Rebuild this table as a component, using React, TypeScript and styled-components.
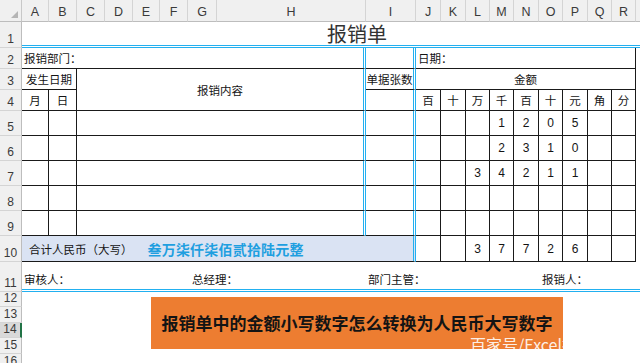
import React from "react";
import styled, { createGlobalStyle } from "styled-components";

const GlobalStyle = createGlobalStyle`
  html, body { margin: 0; padding: 0; background: #ffffff; }
  body {
    width: 640px;
    height: 363px;
    overflow: hidden;
    font-family: "Noto Sans CJK SC", "Liberation Sans", sans-serif;
  }
`;

const COLS = [22, 27, 28, 28, 28, 27, 28, 29, 149, 50, 25, 25, 24, 24, 25, 24, 25, 24, 24, 60];
const ROWS = [22, 26, 21, 21, 21, 25, 25, 25, 25, 25, 26, 30, 15, 16, 15, 16, 16];
const LETTERS = "ABCDEFGHIJKLMNOPQRS".split("");

type Edge = "black" | "blue" | "none";
const edge = (e?: Edge) =>
  e === "black" ? "1px solid #1a1a1a" : e === "blue" ? "3px double #22b0f0" : "none";

const Sheet = styled.div`
  display: grid;
  grid-template-columns: ${COLS.map((c) => c + "px").join(" ")};
  grid-template-rows: ${ROWS.map((r) => r + "px").join(" ")};
  width: 640px;
  height: 363px;
  overflow: hidden;
  background: #ffffff;
`;

const Corner = styled.div`
  grid-area: 1 / 1 / 2 / 2;
  background: #f0f0f0;
  border-right: 1px solid #c8c8c8;
  border-bottom: 1px solid #bdbdbd;
  box-sizing: border-box;
  display: flex;
  align-items: flex-end;
  justify-content: flex-end;
  padding: 0 3px 3px 0;
`;

const ColHead = styled.div<{ $col: number }>`
  grid-area: 1 / ${(p) => p.$col} / 2 / ${(p) => p.$col + 1};
  background: #f0f0f0;
  border-right: 1px solid #d4d4d4;
  border-bottom: 1px solid #bdbdbd;
  box-sizing: border-box;
  display: flex;
  align-items: center;
  justify-content: center;
  font-family: "Liberation Sans", Arial, sans-serif;
  font-size: 12.5px;
  color: #3a3a3a;
  padding-top: 2px;
  overflow: hidden;
`;

const RowHead = styled.div<{ $row: number; $selected?: boolean }>`
  grid-area: ${(p) => p.$row} / 1 / ${(p) => p.$row + 1} / 2;
  background: ${(p) => (p.$selected ? "#d9d9d9" : "#f0f0f0")};
  border-right: ${(p) => (p.$selected ? "2px solid #217346" : "1px solid #bdbdbd")};
  border-bottom: 1px solid #d4d4d4;
  box-sizing: border-box;
  display: flex;
  align-items: flex-end;
  justify-content: center;
  padding-bottom: 1px;
  font-family: "Liberation Sans", Arial, sans-serif;
  font-size: 12px;
  line-height: 14px;
  color: #3a3a3a;
  overflow: hidden;
`;

const Cell = styled.div<{ $area: string; $right?: Edge; $bottom?: Edge }>`
  grid-area: ${(p) => p.$area};
  border-right: ${(p) => edge(p.$right)};
  border-bottom: ${(p) => edge(p.$bottom)};
  box-sizing: border-box;
  min-width: 0;
  overflow: hidden;
  display: flex;
  align-items: center;
  white-space: nowrap;
  color: #141414;
`;

const Title = styled(Cell)`
  justify-content: center;
  overflow: visible;
  font-size: 20px;
  line-height: 22px;
  color: #333333;
  padding-right: 4px;
`;

const HeadLabel = styled(Cell)`
  justify-content: center;
  font-size: 11.5px;
`;

const FieldLabel = styled(Cell)`
  justify-content: flex-start;
  padding-left: 2px;
  font-size: 11.5px;
`;

const Digit = styled(Cell)`
  justify-content: center;
  font-family: "Liberation Sans", Arial, sans-serif;
  font-size: 12px;
`;

const TotalCell = styled(Cell)`
  background: #dae3f3;
  padding-left: 7px;
  gap: 15px;
  font-size: 11.5px;
`;

const TotalWords = styled.span`
  font-size: 14px;
  font-weight: 700;
  color: #1f9fe0;
  letter-spacing: 0.2px;
`;

const SignLabel = styled(Cell)<{ $indent: number }>`
  padding-left: ${(p) => p.$indent}px;
  padding-top: 6px;
  font-size: 11.5px;
`;

const Banner = styled.div`
  grid-area: 13 / 2 / 18 / -1;
  justify-self: start;
  align-self: start;
  position: relative;
  margin: 5px 0 0 129px;
  width: 412px;
  height: 52px;
  background: #ed7d31;
  display: flex;
  align-items: center;
  justify-content: center;
  overflow: hidden;
  font-size: 17px;
  line-height: 20px;
  font-weight: 700;
  color: #141414;
  white-space: nowrap;
`;

const Watermark = styled.span`
  position: absolute;
  left: 319px;
  top: 39px;
  font-size: 16px;
  line-height: 16px;
  font-weight: 400;
  color: rgba(255, 255, 255, 0.9);
`;

const UNITS = ["百", "十", "万", "千", "百", "十", "元", "角", "分"];
const AMOUNTS: string[][] = [
  ["", "", "", "1", "2", "0", "5", "", ""],
  ["", "", "", "2", "3", "1", "0", "", ""],
  ["", "", "3", "4", "2", "1", "1", "", ""],
  ["", "", "", "", "", "", "", "", ""],
  ["", "", "", "", "", "", "", "", ""],
];
const TOTAL = ["", "", "3", "7", "7", "2", "6", "", ""];

const area = (r: number, c: number, r2 = r + 1, c2 = c + 1) => `${r} / ${c} / ${r2} / ${c2}`;

export default function App() {
  return (
    <>
      <GlobalStyle />
      <Sheet>
        <Corner>
          <svg width="7" height="7" viewBox="0 0 7 7">
            <polygon points="7,0 7,7 0,7" fill="#b5b5b5" />
          </svg>
        </Corner>
        {LETTERS.map((l, i) => (
          <ColHead key={l} $col={i + 2}>
            {l}
          </ColHead>
        ))}
        {Array.from({ length: 16 }, (_, i) => (
          <RowHead key={i} $row={i + 2} $selected={i + 1 === 14}>
            {i + 1}
          </RowHead>
        ))}

        {/* Row 1 */}
        <Title $area="2 / 2 / 3 / -1" $bottom="blue">
          报销单
        </Title>

        {/* Row 2 */}
        <FieldLabel $area={area(3, 2, 4, 10)} $right="blue" $bottom="black">
          报销部门：
        </FieldLabel>
        <Cell $area={area(3, 10)} $right="blue" $bottom="black" />
        <FieldLabel $area={area(3, 11, 4, 20)} $right="black" $bottom="black">
          日期：
        </FieldLabel>

        {/* Rows 3-4 */}
        <HeadLabel $area={area(4, 2, 5, 4)} $right="black" $bottom="black">
          发生日期
        </HeadLabel>
        <HeadLabel $area={area(4, 4, 6, 10)} $right="blue" $bottom="black">
          报销内容
        </HeadLabel>
        <HeadLabel $area={area(4, 10)} $right="blue" $bottom="black">
          单据张数
        </HeadLabel>
        <HeadLabel $area={area(4, 11, 5, 20)} $right="black" $bottom="black">
          金额
        </HeadLabel>
        <HeadLabel $area={area(5, 2)} $right="black" $bottom="black">
          月
        </HeadLabel>
        <HeadLabel $area={area(5, 3)} $right="black" $bottom="black">
          日
        </HeadLabel>
        <Cell $area={area(5, 10)} $right="blue" $bottom="black" />
        {UNITS.map((u, i) => (
          <HeadLabel key={"u" + i} $area={area(5, 11 + i)} $right="black" $bottom="black">
            {u}
          </HeadLabel>
        ))}

        {/* Rows 5-9 */}
        {AMOUNTS.map((row, ri) => {
          const t = 6 + ri;
          return (
            <React.Fragment key={"r" + ri}>
              <Cell $area={area(t, 2)} $right="black" $bottom="black" />
              <Cell $area={area(t, 3)} $right="black" $bottom="black" />
              <Cell $area={area(t, 4, t + 1, 10)} $right="blue" $bottom="black" />
              <Cell $area={area(t, 10)} $right="blue" $bottom="black" />
              {row.map((d, ci) => (
                <Digit key={ci} $area={area(t, 11 + ci)} $right="black" $bottom="black">
                  {d}
                </Digit>
              ))}
            </React.Fragment>
          );
        })}

        {/* Row 10 */}
        <TotalCell $area={area(11, 2, 12, 11)} $right="blue" $bottom="black">
          <span>合计人民币（大写）</span>
          <TotalWords>叁万柒仟柒佰贰拾陆元整</TotalWords>
        </TotalCell>
        {TOTAL.map((d, ci) => (
          <Digit key={"t" + ci} $area={area(11, 11 + ci)} $right="black" $bottom="black">
            {d}
          </Digit>
        ))}

        {/* Row 11 */}
        <SignLabel $area={area(12, 2, 13, 8)} $bottom="blue" $indent={2}>
          审核人：
        </SignLabel>
        <SignLabel $area={area(12, 8, 13, 10)} $bottom="blue" $indent={4}>
          总经理：
        </SignLabel>
        <SignLabel $area={area(12, 10, 13, 16)} $bottom="blue" $indent={2}>
          部门主管：
        </SignLabel>
        <SignLabel $area="12 / 16 / 13 / -1" $bottom="blue" $indent={3}>
          报销人：
        </SignLabel>

        {/* Rows 12-16 */}
        <Banner>
          报销单中的金额小写数字怎么转换为人民币大写数字
          <Watermark>百家号/Excel技巧</Watermark>
        </Banner>
      </Sheet>
    </>
  );
}
